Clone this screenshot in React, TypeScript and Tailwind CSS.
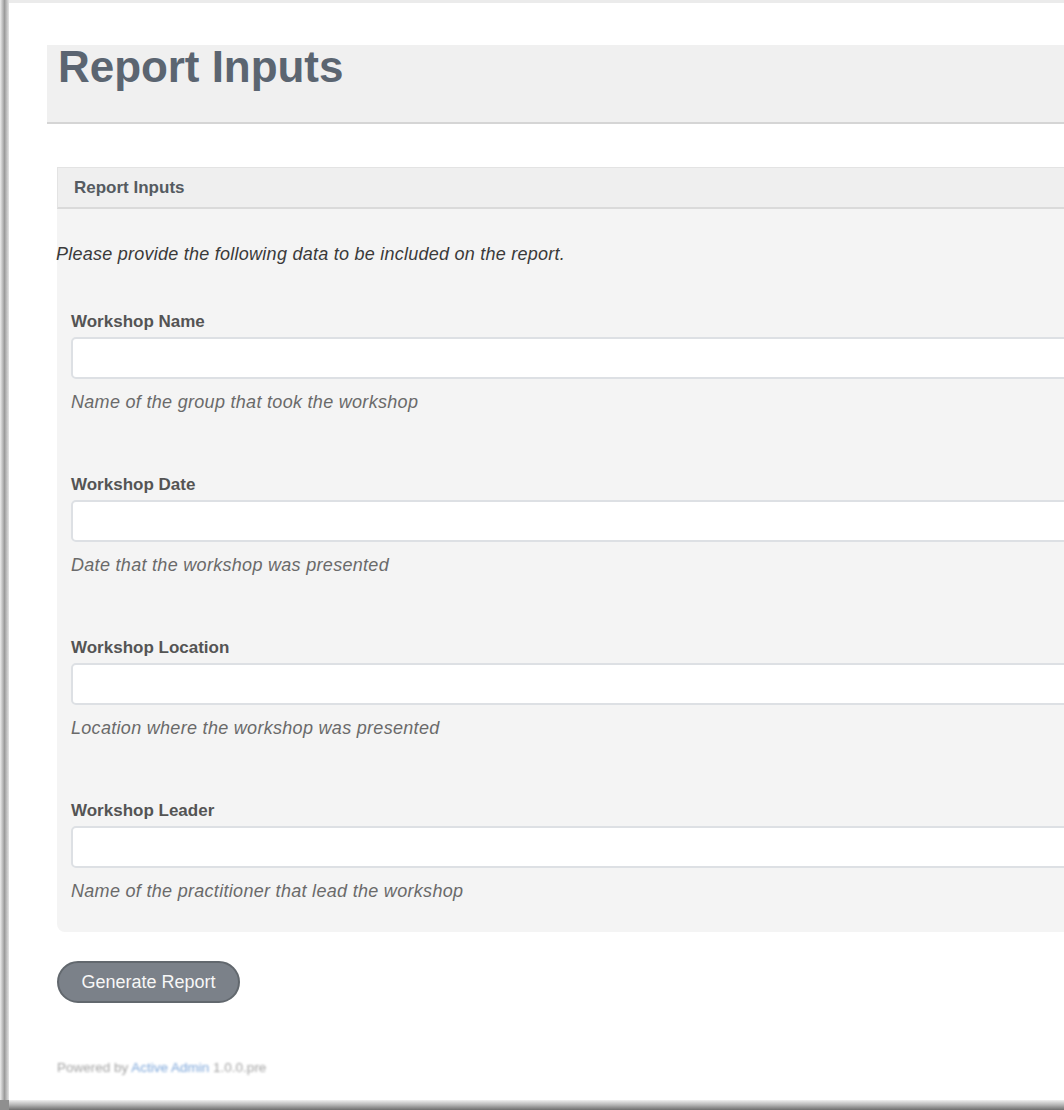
import React from "react";

const fields = [
  { label: "Workshop Name", hint: "Name of the group that took the workshop" },
  { label: "Workshop Date", hint: "Date that the workshop was presented" },
  { label: "Workshop Location", hint: "Location where the workshop was presented" },
  { label: "Workshop Leader", hint: "Name of the practitioner that lead the workshop" },
];

export default function App() {
  return (
    <div className="w-[1064px] h-[1110px] overflow-hidden bg-white flex flex-col font-['Liberation_Sans',Arial,sans-serif]">
      <div className="flex-1 flex min-h-0">
        <div className="w-[9px] shrink-0 bg-gradient-to-r from-[#ececec] via-[#9b9b9b] to-[#e4e4e4]" />
        <div className="flex-1 min-w-0 border-t-[3px] border-[#ebebeb] overflow-hidden">
          <div className="w-[1120px] pt-[42px] pl-[38px]">
            {/* Page title band */}
            <div className="h-[79px] bg-[#f0f0f0] border-b-2 border-[#d5d5d5] pl-[11px]">
              <h1 className="text-[44px] leading-none font-bold text-[#5b6571] tracking-[-0.05px]">
                Report Inputs
              </h1>
            </div>

            {/* Panel */}
            <div className="ml-[10px] mt-[43px]">
              <div className="h-[42px] bg-[#efefef] border-l border-t border-[#e3e3e3] border-b-2 border-b-[#dadada] pl-[16px] flex items-center">
                <span className="text-[17px] font-bold text-[#555b61] tracking-[0px]">Report Inputs</span>
              </div>
              <div className="bg-[#f4f4f4] rounded-bl-[8px] pt-[35px] pb-[31px]">
                <p className="text-[18px] leading-[20px] italic text-[#3a3a3a] tracking-[0.25px] -ml-px">
                  Please provide the following data to be included on the report.
                </p>
                <div className="pl-[14px] mt-[48px] flex flex-col gap-[63px]">
                  {fields.map((f) => (
                    <div key={f.label} className="flex flex-col">
                      <label className="text-[17px] leading-[20px] font-bold text-[#545454] tracking-[0px] mb-[5px]">
                        {f.label}
                      </label>
                      <div className="h-[42px] bg-white border-2 border-[#dde0e4] rounded-[5px]" />
                      <p className="mt-[13px] text-[18px] leading-[20px] italic text-[#6a6a6a] tracking-[0.3px]">
                        {f.hint}
                      </p>
                    </div>
                  ))}
                </div>
              </div>

              <button className="mt-[29px] h-[42px] w-[183px] rounded-full bg-[#7b8189] border-2 border-[#62686e] text-[18px] text-[#f7f7f7] tracking-[0px] flex items-center justify-center">
                Generate Report
              </button>

              <div className="mt-[58px] text-[13.5px] leading-[14px] text-[#8a8a8a] blur-[0.8px] opacity-80">
                Powered by <span className="text-[#5b8fd0]">Active Admin</span> 1.0.0.pre
              </div>
            </div>
          </div>
        </div>
      </div>
      <div className="flex h-[10px] shrink-0">
        <div className="w-[9px] bg-[#8f8f8f]" />
        <div className="flex-1 bg-gradient-to-b from-[#f0f0f0] via-[#b4b4b4] to-[#6f6f6f]" />
      </div>
    </div>
  );
}
